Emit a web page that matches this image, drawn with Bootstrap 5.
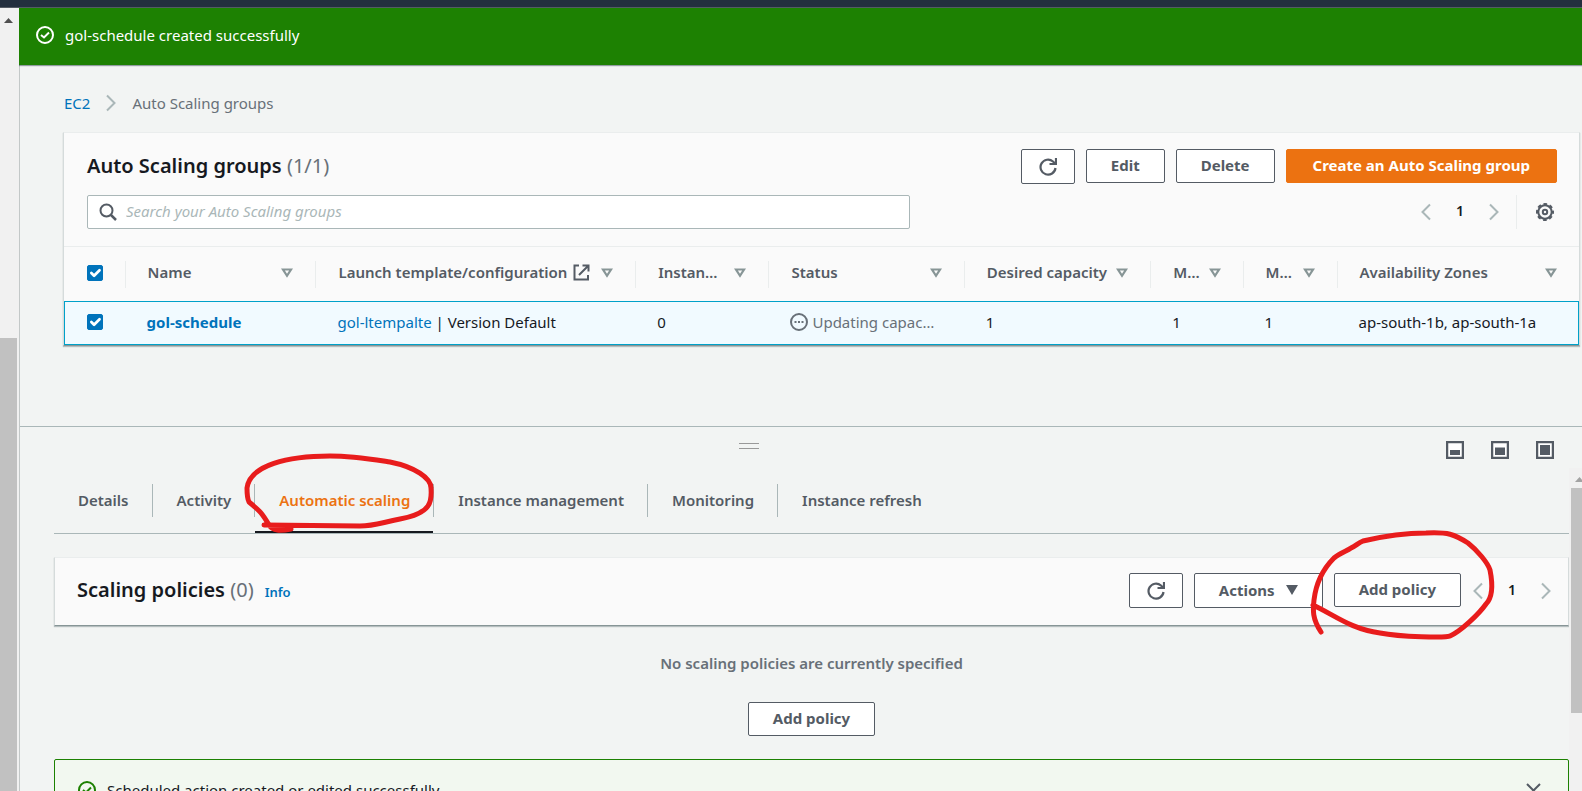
<!DOCTYPE html>
<html lang="en">
<head>
<meta charset="utf-8">
<meta name="viewport" content="width=device-width, initial-scale=1">
<title>Auto Scaling groups | EC2</title>
<link href="https://cdn.jsdelivr.net/npm/bootstrap@5.3.0/dist/css/bootstrap.min.css" rel="stylesheet">
<style>
:root { --ink:#16191f; --slate:#545b64; --muted:#687078; --line:#aab7b8; --soft:#eaeded; --link:#0073bb; --orange:#ec7211; --green:#1d8102; }
body { font-family:"Noto Sans",sans-serif; font-size:15px; line-height:22px; color:var(--ink); background:#f2f4f3; }
a { color:var(--link); text-decoration:none; }
svg { display:block; flex:none; }
.topbar { height:8px; background:#232f3e; border-bottom:1px solid #545b64; }
.rail { width:19px; flex:none; background:#f1f1f1; }
.rail-arrow { height:15px; width:17px; margin-bottom:315px; }
.rail-thumb { width:17px; background:#c1c1c1; }
.flash { height:57px; background:var(--green); color:#fff; padding:0 17px 3px; gap:11px; position:relative; z-index:1; box-shadow:0 1px 1px rgba(0,28,36,.4); }
.pane { border-left:1px solid #c3c8c8; }
.list-area { padding:27px 2px 0 43px; height:361px; }
.crumbs { gap:16px; margin-bottom:18px; padding-left:1px; color:var(--muted); }
.panel { background:#fafafa; border:1px solid #d5dbdb; border-top-color:var(--soft); border-bottom-color:#879596; box-shadow:0 1px 1px rgba(0,28,36,.25); }
.panel h2 { font-size:20px; line-height:26px; font-weight:600; margin:0; }
.panel h2 span { font-weight:400; color:var(--muted); }
.panel-head { padding:16px 22px 17px 23px; }
.bar-gap { gap:11px; }
.find-row { margin-top:11px; }
.aws-btn { font-size:15px; line-height:22px; font-weight:700; border:1px solid var(--slate); border-radius:2px; color:var(--slate); background:#fff; padding:4px 24px 6px; height:34px; white-space:nowrap; }
.aws-btn.go { background:var(--orange); border-color:var(--orange); color:#fff; padding:4px 26px 6px; }
.aws-btn.sq { padding:0; width:54px; height:35px; display:flex; align-items:center; justify-content:center; }
.aws-btn.menu { height:35px; gap:11px; }
.plain { border:0; background:none; padding:0; color:inherit; }
.find { width:56%; height:34px; border:1px solid var(--line); border-radius:2px; background:#fff; padding:0 11px; gap:9px; color:var(--slate); }
.find input { border:0; outline:0; flex:1; background:none; font-size:15px; padding:0 0 2px; }
.find input::placeholder { color:var(--line); font-style:italic; opacity:1; }
.pager { color:var(--line); }
.pager b { color:var(--ink); font-size:14px; font-weight:600; padding:0 25px 2px; }
.pager.beside { margin-left:12px; padding-top:6px; }
.cog { border-left:1px solid var(--soft); height:34px; padding-left:19px; color:var(--slate); margin-left:17px; padding-right:3px; }
.groups { table-layout:fixed; width:100%; border-collapse:separate; border-spacing:0; }
.groups th { height:55px; padding:0; border-top:1px solid var(--soft); font-weight:600; color:var(--slate); }
.groups th > div { height:27px; padding:0 22px 4px; border-left:1px solid var(--soft); gap:6px; }
.groups th:first-child > div { padding:0 0 3px 23px; border-left:0; }
.groups td { height:44px; padding:0 22px 3px; background:#f1faff; border-top:1px solid #00a1c9; border-bottom:1px solid #00a1c9; white-space:nowrap; }
.groups td:first-child { border-left:1px solid #00a1c9; padding:0 0 3px 22px; }
.groups td:last-child { border-right:1px solid #00a1c9; padding-right:0; }
.groups .sort { color:#879596; margin-left:auto; padding-top:2px; }
.groups .form-check-input { width:16px; height:16px; margin:0; border-radius:2px; border-color:var(--link); background-color:var(--link); background-size:130%; display:block; }
.status { color:var(--muted); }
.w-pick { width:4%; } .w-name { width:12.6%; } .w-launch { width:21.1%; } .w-inst { width:8.8%; } .w-status { width:12.9%; } .w-cap { width:12.3%; } .w-min { width:6.1%; } .w-max { width:6.2%; }
.split { border-top:1px solid var(--line); min-height:0; }
.split-bar { height:41px; padding:14px 28px 0 0; color:var(--slate); gap:27px; position:relative; }
.grip { width:20px; height:6px; border:solid #999; border-width:1px 0; position:absolute; left:46%; top:16px; }
.details { padding:0 0 0 34px; }
.tabs { border-bottom:1px solid var(--line); height:66px; padding-top:16px; margin-bottom:23px; }
.tabs a { color:var(--slate); font-weight:600; height:49px; padding:5px 23px 0 24px; position:relative; white-space:nowrap; }
.tabs a + a { margin-left:1px; }
.tabs a + a::before { content:""; position:absolute; left:-1px; top:0; height:33px; border-left:1px solid var(--line); }
.tabs a.active { color:var(--orange); border-bottom:2px solid var(--ink); }
.scribble { position:absolute; fill:none; stroke:#e81c1c; stroke-width:5; stroke-linecap:round; stroke-linejoin:round; pointer-events:none; z-index:3; overflow:visible; }
.on-tab { left:-8px; top:-28px; }
.on-add { left:-21px; top:-41px; }
.info { font-size:13px; font-weight:600; padding-top:8px; margin-left:11px; }
.policies-head { padding:15px 17px 17px 22px; }
.none { padding:26px 0 23px; }
.none p { font-weight:600; color:var(--muted); margin:0 0 28px; }
.notice { border:1px solid var(--green); border-radius:2px; background:#f2f8f0; padding:20px 27px 20px 23px; gap:11px; height:62px; }
.inner-rail { width:13px; background:#f1f1f1; padding-left:2px; flex:none; }
.inner-rail .rail-arrow { width:17px; height:14px; margin:0 0 6px; }
.inner-thumb { height:225px; background:#c1c1c1; }
</style>
</head>
<body class="vh-100 overflow-hidden d-flex flex-column">
<svg width="0" height="0" class="position-absolute" aria-hidden="true">
  <symbol id="ok" viewBox="0 0 18 18"><g fill="none" stroke="currentColor" stroke-width="2"><circle cx="9" cy="9" r="8"/><path d="M5 9l3 2.500 5-5"/></g></symbol>
  <symbol id="next" viewBox="0 0 10 18"><path d="M1 1.500l7.500 7.500L1 16.500" fill="none" stroke="currentColor" stroke-width="2"/></symbol>
  <symbol id="prev" viewBox="0 0 10 18"><path d="M9 1.500L1.500 9 9 16.500" fill="none" stroke="currentColor" stroke-width="2"/></symbol>
  <symbol id="reload" viewBox="0 0 18 18"><g fill="none" stroke="currentColor" stroke-width="2.200"><path d="M16.500 10A7.500 7.500 0 1 1 14 3.500l2 2"/><path d="M17 0v6h-6.500"/></g></symbol>
  <symbol id="down" viewBox="0 0 12 10"><path d="M2 1.500h8L6 7.800z" fill="none" stroke="currentColor" stroke-width="2.200"/></symbol>
  <symbol id="up" viewBox="0 0 9 5"><path d="M4.500 0L9 5H0z" fill="currentColor"/></symbol>
</svg>

<header class="topbar flex-shrink-0"></header>
<div class="d-flex flex-grow-1 overflow-hidden">
  <div class="rail d-flex flex-column" aria-hidden="true">
    <div class="rail-arrow d-flex align-items-end justify-content-center"><svg width="9" height="5" color="#505050"><use href="#up"/></svg></div>
    <div class="rail-thumb flex-grow-1"></div>
  </div>

  <main class="flex-grow-1 d-flex flex-column overflow-hidden">
    <div class="flash d-flex align-items-center flex-shrink-0" role="status">
      <svg width="18" height="18"><use href="#ok"/></svg><span>gol-schedule created successfully</span>
    </div>
    <div class="pane flex-grow-1 d-flex flex-column overflow-hidden">
      <section class="list-area flex-shrink-0">
        <nav class="crumbs d-flex align-items-center" aria-label="Breadcrumb">
          <a href="#">EC2</a><svg width="10" height="18" color="#aab7b8"><use href="#next"/></svg><span>Auto Scaling groups</span>
        </nav>
        <div class="panel">
          <div class="panel-head">
            <div class="d-flex align-items-start justify-content-between">
              <h2 class="pt-1">Auto Scaling groups <span>(1/1)</span></h2>
              <div class="bar-gap d-flex">
                <button class="aws-btn sq" aria-label="Refresh"><svg width="18" height="18"><use href="#reload"/></svg></button>
                <button class="aws-btn">Edit</button>
                <button class="aws-btn">Delete</button>
                <button class="aws-btn go">Create an Auto Scaling group</button>
              </div>
            </div>
            <div class="find-row d-flex align-items-center justify-content-between">
              <label class="find d-flex align-items-center">
                <svg width="18" height="18" viewBox="0 0 18 18"><g fill="none" stroke="currentColor" stroke-width="2"><circle cx="7.500" cy="7.500" r="6"/><path d="M12 12l5 5" stroke-width="2.500"/></g></svg>
                <input type="text" placeholder="Search your Auto Scaling groups" aria-label="Search your Auto Scaling groups">
              </label>
              <div class="pager d-flex align-items-center">
                <button class="plain" aria-label="Previous page"><svg width="10" height="18"><use href="#prev"/></svg></button>
                <b>1</b>
                <button class="plain" aria-label="Next page"><svg width="10" height="18"><use href="#next"/></svg></button>
                <button class="plain cog" aria-label="Preferences"><svg width="18" height="18" viewBox="0 0 18 18"><g fill="none" stroke="currentColor"><circle cx="9" cy="9" r="6.700" stroke-width="2"/><circle cx="9" cy="9" r="8" stroke-width="2" stroke-dasharray="3.600 2.683" stroke-dashoffset="1.800"/><circle cx="9" cy="9" r="2.200" stroke-width="2"/></g></svg></button>
              </div>
            </div>
          </div>
          <table class="groups">
            <colgroup><col class="w-pick"><col class="w-name"><col class="w-launch"><col class="w-inst"><col class="w-status"><col class="w-cap"><col class="w-min"><col class="w-max"><col></colgroup>
            <thead>
              <tr>
                <th><div class="d-flex align-items-center"><input class="form-check-input" type="checkbox" checked aria-label="Select all"></div></th>
                <th><div class="d-flex align-items-center"><span>Name</span><button class="plain sort" aria-label="Sort"><svg width="12" height="10"><use href="#down"/></svg></button></div></th>
                <th><div class="d-flex align-items-center"><span class="text-nowrap">Launch template/configuration</span><svg width="17" height="17" viewBox="0 0 17 17"><g fill="none" stroke="currentColor" stroke-width="2"><path d="M6 1.500H1.500v14H15V11M9.500 1.500h6v6M15 2L6 11"/></g></svg><button class="plain sort" aria-label="Sort"><svg width="12" height="10"><use href="#down"/></svg></button></div></th>
                <th><div class="d-flex align-items-center"><span class="text-nowrap">Instan…</span><button class="plain sort" aria-label="Sort"><svg width="12" height="10"><use href="#down"/></svg></button></div></th>
                <th><div class="d-flex align-items-center"><span>Status</span><button class="plain sort" aria-label="Sort"><svg width="12" height="10"><use href="#down"/></svg></button></div></th>
                <th><div class="d-flex align-items-center"><span class="text-nowrap">Desired capacity</span><button class="plain sort" aria-label="Sort"><svg width="12" height="10"><use href="#down"/></svg></button></div></th>
                <th><div class="d-flex align-items-center"><span class="text-nowrap">M…</span><button class="plain sort" aria-label="Sort"><svg width="12" height="10"><use href="#down"/></svg></button></div></th>
                <th><div class="d-flex align-items-center"><span class="text-nowrap">M…</span><button class="plain sort" aria-label="Sort"><svg width="12" height="10"><use href="#down"/></svg></button></div></th>
                <th><div class="d-flex align-items-center"><span class="text-nowrap">Availability Zones</span><button class="plain sort" aria-label="Sort"><svg width="12" height="10"><use href="#down"/></svg></button></div></th>
              </tr>
            </thead>
            <tbody>
              <tr>
                <td><input class="form-check-input" type="checkbox" checked aria-label="Select gol-schedule"></td>
                <td><a href="#" class="fw-bold">gol-schedule</a></td>
                <td><a href="#">gol-ltempalte</a> | Version Default</td>
                <td>0</td>
                <td><div class="status d-flex align-items-center gap-1"><svg width="18" height="18" viewBox="0 0 18 18"><circle cx="9" cy="9" r="8" fill="none" stroke="currentColor" stroke-width="2"/><path d="M4.500 8h2v2h-2zM8 8h2v2H8zM11.500 8h2v2h-2z" fill="currentColor"/></svg><span>Updating capac…</span></div></td>
                <td>1</td>
                <td>1</td>
                <td>1</td>
                <td>ap-south-1b, ap-south-1a</td>
              </tr>
            </tbody>
          </table>
        </div>
      </section>

      <section class="split flex-grow-1 d-flex flex-column">
        <div class="split-bar d-flex justify-content-end align-items-start flex-shrink-0">
          <div class="grip"></div>
          <button class="plain" aria-label="Small panel"><svg width="18" height="18" viewBox="0 0 18 18"><path d="M1 1h16v16H1z" fill="#fff" stroke="currentColor" stroke-width="2.500"/><path d="M4 9h10v5H4z" fill="currentColor"/></svg></button>
          <button class="plain" aria-label="Medium panel"><svg width="18" height="18" viewBox="0 0 18 18"><path d="M1 1h16v16H1z" fill="#fff" stroke="currentColor" stroke-width="2.500"/><path d="M4 6.500h10V14H4z" fill="currentColor"/></svg></button>
          <button class="plain" aria-label="Full panel"><svg width="18" height="18" viewBox="0 0 18 18"><path d="M1 1h16v16H1z" fill="#fff" stroke="currentColor" stroke-width="2.500"/><path d="M4 4h10v10H4z" fill="currentColor"/></svg></button>
        </div>
        <div class="d-flex flex-grow-1">
          <div class="details flex-grow-1">
            <nav class="tabs d-flex">
              <a href="#">Details</a>
              <a href="#">Activity</a>
              <a href="#" class="active" aria-current="page">Automatic scaling
                <svg class="scribble on-tab" width="186" height="74" viewBox="247 455 186 74" aria-hidden="true"><path d="M291 528C280 530 273 530 269 524C262 512 260 510 249 501C247 497 247 487 247 487C250 464 288 455 330 455C352 455 370 458 390 461C415 466 431 477 431 487C432 500 432 512 400 518C380 522 374 525 360 525L264 524"/></svg>
              </a>
              <a href="#">Instance management</a>
              <a href="#">Monitoring</a>
              <a href="#">Instance refresh</a>
            </nav>
            <div class="panel">
              <div class="policies-head d-flex align-items-start">
                <h2 class="pt-1">Scaling policies <span>(0)</span></h2>
                <a href="#" class="info me-auto">Info</a>
                <div class="bar-gap d-flex">
                  <button class="aws-btn sq" aria-label="Refresh"><svg width="18" height="18"><use href="#reload"/></svg></button>
                  <button class="aws-btn menu d-flex align-items-center">Actions <svg width="12" height="10" viewBox="0 0 12 10"><path d="M0 0h12L6 10z" fill="currentColor"/></svg></button>
                  <div class="position-relative">
                    <button class="aws-btn">Add policy</button>
                    <svg class="scribble on-add" width="180" height="106" viewBox="1312 532 180 106" aria-hidden="true"><path d="M1320 632C1311 618 1312 610 1313 600C1315 583 1323 568 1333 558C1339 553 1346 551 1350 548C1356 545 1357 543 1362 541C1379 537 1405 533 1425 533C1447 532 1453 534 1467 543C1476 550 1487 563 1489 570C1493 590 1490 599 1485 604C1478 614 1460 631 1449 636C1445 638 1400 637 1379 633C1350 629 1335 616 1312 605"/></svg>
                  </div>
                </div>
                <div class="pager beside d-flex align-items-center">
                  <button class="plain" aria-label="Previous page"><svg width="10" height="18"><use href="#prev"/></svg></button>
                  <b>1</b>
                  <button class="plain" aria-label="Next page"><svg width="10" height="18"><use href="#next"/></svg></button>
                </div>
              </div>
            </div>
            <div class="none text-center">
              <p>No scaling policies are currently specified</p>
              <button class="aws-btn">Add policy</button>
            </div>
            <div class="notice d-flex align-items-center" role="status">
              <svg width="18" height="18" color="#1d8102"><use href="#ok"/></svg>
              <span class="me-auto">Scheduled action created or edited successfully</span>
              <button class="plain" aria-label="Dismiss"><svg width="15" height="15" viewBox="0 0 15 15"><path d="M1 1l13 13M14 1L1 14" stroke="#545b64" stroke-width="2"/></svg></button>
            </div>
          </div>
          <div class="inner-rail overflow-hidden" aria-hidden="true">
            <div class="rail-arrow d-flex align-items-end justify-content-center"><svg width="9" height="5" color="#a3a3a3"><use href="#up"/></svg></div>
            <div class="inner-thumb"></div>
          </div>
        </div>
      </section>
    </div>
  </main>
</div>
<script src="https://cdn.jsdelivr.net/npm/bootstrap@5.3.0/dist/js/bootstrap.bundle.min.js"></script>
</body>
</html>
